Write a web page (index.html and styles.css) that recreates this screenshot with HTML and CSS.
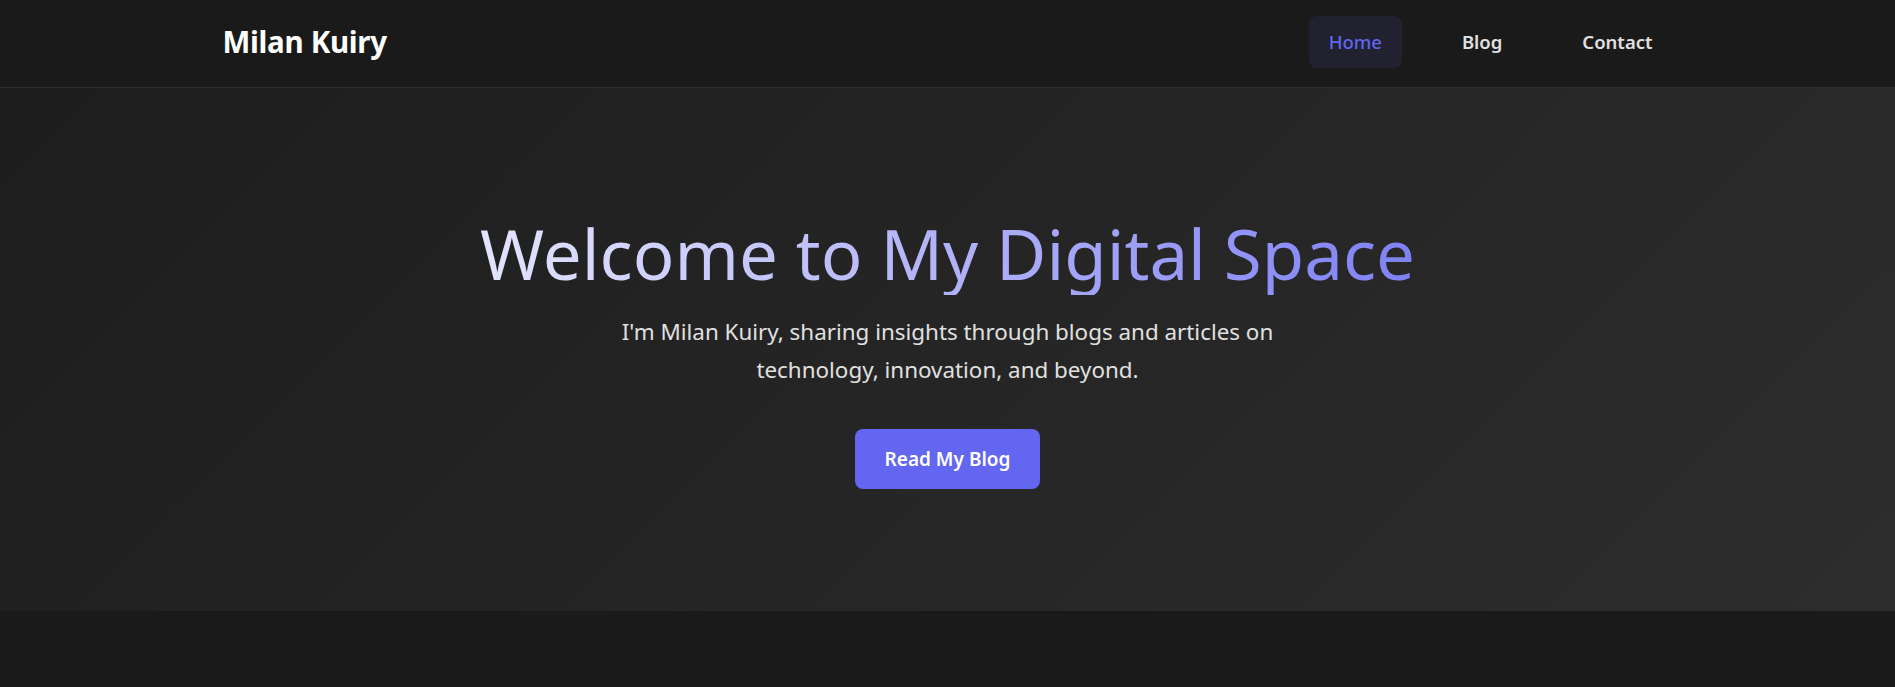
FILE: index.html
```html
<!DOCTYPE html>
<html lang="en">
<head>
<meta charset="utf-8">
<title>Milan Kuiry</title>
<link rel="stylesheet" href="styles.css">
</head>
<body>
<header class="site-header">
  <div class="container header-inner">
    <a class="logo" href="#">Milan Kuiry</a>
    <nav class="nav">
      <a class="nav-link active" href="#">Home</a>
      <a class="nav-link" href="#">Blog</a>
      <a class="nav-link" href="#">Contact</a>
    </nav>
  </div>
</header>
<section class="hero">
  <div class="container hero-inner">
    <h1 class="hero-title">Welcome to My Digital Space</h1>
    <p class="hero-text">I'm Milan Kuiry, sharing insights through blogs and articles on technology, innovation, and beyond.</p>
    <a class="btn" href="#">Read My Blog</a>
  </div>
</section>
</body>
</html>
```
FILE: styles.css
```css
* { box-sizing: border-box; }
html, body { margin: 0; padding: 0; }
body {
  background: #1a1a1a;
  color: #e0e0e0;
  font-family: "Noto Sans", "Open Sans", sans-serif;
  min-height: 687px;
}
a { text-decoration: none; }
.container {
  max-width: 1450px;
  margin: 0 auto;
}
.site-header {
  background: #1a1a1a;
  border-bottom: 1px solid #2f2f2f;
}
.header-inner {
  height: 87px;
  padding-bottom: 4px;
  display: flex;
  align-items: center;
  justify-content: space-between;
}
.logo {
  color: #ffffff;
  font-size: 29.5px;
  font-weight: 700;
  letter-spacing: -0.3px;
}
.nav {
  display: flex;
  gap: 40px;
  align-items: center;
}
.nav-link {
  color: #e0e0e0;
  font-size: 18.5px;
  font-weight: 600;
  line-height: 24px;
  padding: 14px 20px;
  border-radius: 8px;
}
.nav-link.active {
  color: #6366f1;
  font-weight: 500;
  background: rgba(99, 102, 241, 0.1);
}
.hero {
  background: linear-gradient(135deg, #1d1d1d 0%, #2d2d2d 100%);
  padding: 124px 0 122px;
}
.hero-inner {
  display: flex;
  flex-direction: column;
  align-items: center;
  text-align: center;
}
.hero-title {
  align-self: stretch;
  margin: 0 0 18px;
  font-size: 69px;
  font-weight: 400;
  line-height: 1.2;
  background: linear-gradient(90deg, #ffffff 0%, #6366f1 100%);
  -webkit-background-clip: text;
  background-clip: text;
  color: transparent;
}
.hero-text {
  margin: 0 0 40px;
  max-width: 690px;
  font-size: 22.4px;
  line-height: 38px;
  color: #e0e0e0;
}
.btn {
  display: inline-block;
  background: #6366f1;
  color: #ffffff;
  font-size: 19px;
  font-weight: 600;
  line-height: 26px;
  padding: 17px 30px;
  border-radius: 8px;
}
```
